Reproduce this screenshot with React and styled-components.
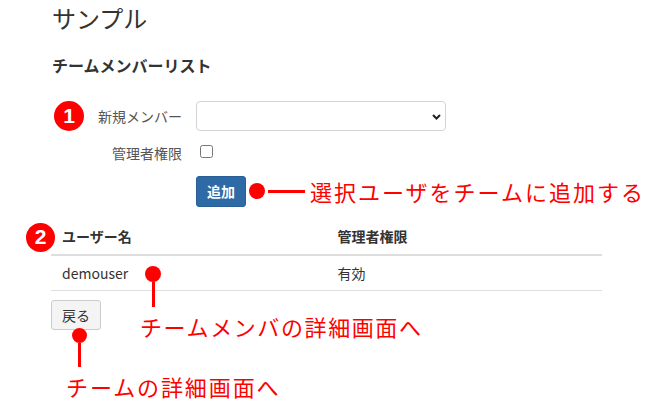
import React from 'react'
import styled, { createGlobalStyle } from 'styled-components'

const GlobalStyle = createGlobalStyle`
  html, body, #root {
    height: 100%;
  }
  body {
    margin: 0;
    background: #fff;
    color: #333;
    font-family: "Noto Sans CJK JP", "Noto Sans", sans-serif;
  }
`;

const Page = styled.div`
  box-sizing: border-box;
  min-height: 100%;
  padding: 4px 0 0 51px;
`;

const Title = styled.h1`
  margin: 0 0 0 1px;
  font-size: 24px;
  font-weight: 400;
  line-height: 1.2;
`;

const SubTitle = styled.h2`
  margin: 23px 0 0 1px;
  font-size: 16px;
  font-weight: 700;
  line-height: 1.2;
`;

const Form = styled.div`
  margin-top: 26px;
`;

const FormRow = styled.div`
  display: flex;
  align-items: ${p => p.$top ? 'flex-start' : 'center'};
  margin-top: ${p => p.$gap || 0}px;
`;

const LabelCell = styled.div`
  width: 131px;
  margin-right: 14px;
  display: flex;
  align-items: center;
`;

const Label = styled.label`
  margin-left: auto;
  font-size: 14px;
  line-height: 20px;
  color: #555;
`;

const Badge = styled.span`
  width: ${p => p.$size}px;
  height: ${p => p.$size}px;
  border-radius: 50%;
  background: #f00;
  color: #fff;
  font-family: "Liberation Sans", Arial, sans-serif;
  font-weight: 700;
  font-size: 21px;
  display: flex;
  align-items: center;
  justify-content: center;
  flex: none;
`;

const FirstBadge = styled(Badge)`
  margin-left: 3px;
`;

const SideBadge = styled(Badge)`
  position: absolute;
  left: -25px;
  top: 5px;
`;

const SelectWrap = styled.div`
  position: relative;
  width: 250px;
  height: 30px;
`;

const Select = styled.select`
  appearance: none;
  width: 100%;
  height: 100%;
  box-sizing: border-box;
  border: 1px solid #d4d4d4;
  border-radius: 4px;
  background: #fff;
  font: inherit;
  font-size: 14px;
`;

const Chevron = styled.svg`
  position: absolute;
  right: 5px;
  top: 13px;
  pointer-events: none;
`;

const Check = styled.input`
  margin: 2px 0 0 4px;
  width: 13px;
  height: 13px;
`;

const Controls = styled.div`
  display: flex;
  align-items: center;
  margin: 13px 0 0 145px;
`;

const PrimaryButton = styled.button`
  box-sizing: border-box;
  height: 31px;
  padding: 0 10px;
  border: 1px solid #285f96;
  border-radius: 3px;
  background: #2d6aa6;
  color: #fff;
  font: inherit;
  font-size: 14px;
  font-weight: 700;
  line-height: 19px;
`;

const Dot = styled.span`
  width: ${p => p.$size || 16}px;
  height: ${p => p.$size || 16}px;
  margin-left: ${p => p.$ml || 0}px;
  border-radius: 50%;
  background: #f00;
  flex: none;
`;

const HLine = styled.span`
  width: 37px;
  height: 3px;
  margin: 0 5px 0 3px;
  background: #f00;
`;

const Note = styled.span`
  color: #f00;
  font-size: 22px;
  font-weight: 400;
  line-height: 1.2;
  letter-spacing: 2px;
  white-space: nowrap;
`;

const Section = styled.div`
  position: relative;
  margin-top: 11px;
`;

const Table = styled.table`
  width: 551px;
  border-collapse: collapse;
  table-layout: fixed;
  font-size: 14px;
`;

const Th = styled.th`
  text-align: left;
  padding: 8px 11px 8px;
  line-height: 20px;
  font-weight: 700;
  border-bottom: 2px solid #ddd;
`;

const Td = styled.td`
  padding: 7px 11px 7px;
  line-height: 20px;
  border-bottom: 1px solid #ddd;
`;

const BackButton = styled.button`
  margin-top: 9px;
  box-sizing: border-box;
  height: 30px;
  padding: 0 10px;
  border: 1px solid #ccc;
  border-radius: 3px;
  background: #f4f4f4;
  color: #333;
  font: inherit;
  font-size: 14px;
  line-height: 18px;
`;

const Callout = styled.div`
  position: absolute;
  left: ${p => p.$left}px;
  top: ${p => p.$top}px;
  display: flex;
  flex-direction: column;
  align-items: flex-start;
`;

const Stem = styled.span`
  width: 3px;
  height: ${p => p.$h}px;
  margin-left: ${p => p.$x}px;
  background: #f00;
`;

const CalloutNote = styled(Note)`
  margin: 6px 0 0 ${p => p.$x}px;
  letter-spacing: ${p => p.$ls}px;
`;

export default function App() {
  return (
    <>
      <GlobalStyle />
      <Page>
        <Title>サンプル</Title>
        <SubTitle>チームメンバーリスト</SubTitle>

        <Form>
          <FormRow>
            <LabelCell>
              <FirstBadge $size={30}>1</FirstBadge>
              <Label>新規メンバー</Label>
            </LabelCell>
            <SelectWrap>
              <Select defaultValue="">
                <option value=""></option>
              </Select>
              <Chevron width="9" height="6" viewBox="0 0 9 6">
                <path d="M1 1l3.5 3.5L8 1" fill="none" stroke="#222" strokeWidth="2" />
              </Chevron>
            </SelectWrap>
          </FormRow>

          <FormRow $top $gap={12}>
            <LabelCell>
              <Label>管理者権限</Label>
            </LabelCell>
            <Check type="checkbox" />
          </FormRow>

          <Controls>
            <PrimaryButton>追加</PrimaryButton>
            <Dot $ml={3} />
            <HLine />
            <Note>選択ユーザをチームに追加する</Note>
          </Controls>
        </Form>

        <Section>
          <SideBadge $size={29}>2</SideBadge>
          <Table>
            <thead>
              <tr>
                <Th>ユーザー名</Th>
                <Th>管理者権限</Th>
              </tr>
            </thead>
            <tbody>
              <tr>
                <Td>demouser</Td>
                <Td>有効</Td>
              </tr>
            </tbody>
          </Table>
          <BackButton>戻る</BackButton>

          <Callout $left={94} $top={48}>
            <Dot />
            <Stem $x={6.5} $h={25} />
            <CalloutNote $x={-5} $ls={1.6}>チームメンバの詳細画面へ</CalloutNote>
          </Callout>

          <Callout $left={21} $top={110}>
            <Dot $size={15} />
            <Stem $x={6} $h={24} />
            <CalloutNote $x={-6} $ls={1.9}>チームの詳細画面へ</CalloutNote>
          </Callout>
        </Section>
      </Page>
    </>
  )
}
